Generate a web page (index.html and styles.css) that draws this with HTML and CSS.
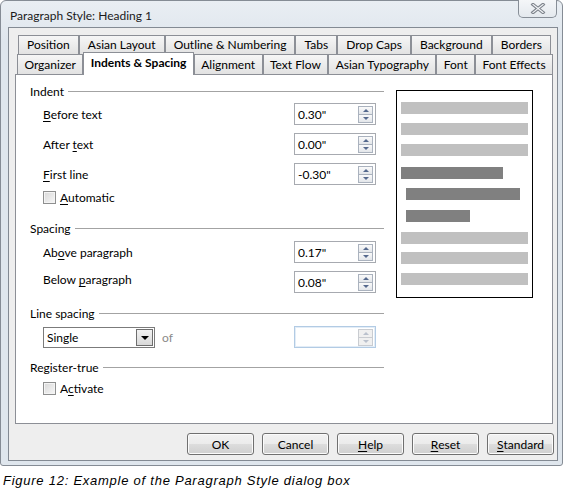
FILE: index.html
```html
<!DOCTYPE html>
<html>
<head>
<meta charset="utf-8">
<link rel="stylesheet" href="styles.css">
</head>
<body>
<div class="window">
  <div class="titlebar">
    <span class="title">Paragraph Style: Heading 1</span>
    <span class="close">
      <svg width="16" height="11" viewBox="0 0 16 11"><path d="M3 1.5 L13 9.5 M13 1.5 L3 9.5" stroke="#7d838b" stroke-width="3.4" stroke-linecap="square" fill="none"/><path d="M3 1.5 L13 9.5 M13 1.5 L3 9.5" stroke="#f3f5f8" stroke-width="1.2" stroke-linecap="square" fill="none"/></svg>
    </span>
  </div>
  <div class="client">
    <div class="tabrow row1">
      <div class="tab">Position</div>
      <div class="tab">Asian Layout</div>
      <div class="tab">Outline &amp; Numbering</div>
      <div class="tab">Tabs</div>
      <div class="tab">Drop Caps</div>
      <div class="tab">Background</div>
      <div class="tab">Borders</div>
    </div>
    <div class="tabrow row2">
      <div class="tab">Organizer</div>
      <div class="tab active">Indents &amp; Spacing</div>
      <div class="tab">Alignment</div>
      <div class="tab">Text Flow</div>
      <div class="tab">Asian Typography</div>
      <div class="tab">Font</div>
      <div class="tab">Font Effects</div>
    </div>
    <div class="panel">
      <div class="leftcol">
        <div class="ghead">Indent</div>
        <div class="field f-first">
          <span><u>B</u>efore text</span>
          <div class="spin"><span class="val">0.30"</span><span class="arrows"><span class="ab up"></span><span class="ab dn"></span></span></div>
        </div>
        <div class="field f-next">
          <span>After <u>t</u>ext</span>
          <div class="spin"><span class="val">0.00"</span><span class="arrows"><span class="ab up"></span><span class="ab dn"></span></span></div>
        </div>
        <div class="field f-next">
          <span><u>F</u>irst line</span>
          <div class="spin"><span class="val">-0.30"</span><span class="arrows"><span class="ab up"></span><span class="ab dn"></span></span></div>
        </div>
        <div class="check c-auto"><span class="box"></span><span><u>A</u>utomatic</span></div>

        <div class="ghead h-spacing">Spacing</div>
        <div class="field f-above">
          <span>Ab<u>o</u>ve paragraph</span>
          <div class="spin"><span class="val">0.17"</span><span class="arrows"><span class="ab up"></span><span class="ab dn"></span></span></div>
        </div>
        <div class="field f-next high">
          <span>Below <u>p</u>aragraph</span>
          <div class="spin"><span class="val">0.08"</span><span class="arrows"><span class="ab up"></span><span class="ab dn"></span></span></div>
        </div>

        <div class="ghead h-line">Line spacing</div>
        <div class="field f-select">
          <div class="selrow">
            <div class="select"><span class="val">Single</span><span class="drop"><span class="tri"></span></span></div>
            <span class="of">of</span>
          </div>
          <div class="spin disabled"><span class="val"></span><span class="arrows"><span class="ab up"></span><span class="ab dn"></span></span></div>
        </div>

        <div class="ghead h-reg">Register-true</div>
        <div class="check c-act"><span class="box"></span><span>A<u>c</u>tivate</span></div>
      </div>
      <div class="preview">
        <div class="bar light"></div>
        <div class="bar light"></div>
        <div class="bar light"></div>
        <div class="bar dark d1"></div>
        <div class="bar dark d2"></div>
        <div class="bar dark d3"></div>
        <div class="bar light l7"></div>
        <div class="bar light l8"></div>
        <div class="bar light"></div>
      </div>
    </div>
    <div class="buttons">
      <div class="btn">OK</div>
      <div class="btn">Cancel</div>
      <div class="btn"><u>H</u>elp</div>
      <div class="btn"><u>R</u>eset</div>
      <div class="btn"><u>S</u>tandard</div>
    </div>
  </div>
</div>
<div class="caption">Figure 12: Example of the Paragraph Style dialog box</div>
</body>
</html>
```
FILE: styles.css
```css
html, body {
  margin: 0;
  padding: 0;
  background: #ffffff;
}
body {
  width: 563px;
  height: 498px;
  overflow: hidden;
  font-family: Lato, "Open Sans", sans-serif;
  font-size: 12px;
  color: #000;
}
u {
  text-decoration: underline;
  text-underline-offset: 2px;
}
.window {
  width: 563px;
  box-sizing: border-box;
  border: 1px solid #858c95;
  border-radius: 6px 6px 3px 3px;
  background: linear-gradient(#e9eef3, #dfe6ed 40px, #dfe6ed);
  padding: 0 4px 4px 7px;
}
.titlebar {
  height: 26px;
  display: flex;
  justify-content: space-between;
  align-items: flex-start;
}
.title {
  padding-left: 2px;
  padding-top: 7px;
  line-height: 16px;
  color: #1a1a1a;
}
.close {
  width: 39px;
  height: 18px;
  box-sizing: border-box;
  margin-top: -1px;
  margin-right: 1px;
  border: 1px solid #878e97;
  border-top: none;
  border-radius: 0 0 5px 5px;
  background: linear-gradient(#f4f6f8, #e4e9ee);
  display: flex;
  align-items: center;
  justify-content: center;
}
.close svg { display: block; }
.client {
  border: 1px solid #838a93;
  background: #eeeeee;
  padding: 7px 4px 5px 6px;
}
.tabrow {
  display: flex;
}
.row1 {
  margin: 0 2px 0 3px;
  height: 19px;
}
.row2 {
  margin: 0 0 0 2px;
  height: 20px;
}
.tab {
  flex: 1 1 auto;
  box-sizing: border-box;
  border: 1px solid #8c8f96;
  border-bottom: none;
  background: linear-gradient(#f6f6f6, #e2e2e2);
  text-align: center;
  padding: 0 5px;
  white-space: nowrap;
}
.row1 .tab { line-height: 18px; }
.row2 .tab { line-height: 19px; }
.tab.active {
  background: #ffffff;
  font-weight: bold;
  height: 23px;
  margin-top: -2px;
  line-height: 20px;
  position: relative;
  z-index: 2;
}
.panel {
  height: 350px;
  box-sizing: border-box;
  border: 1px solid #8c8f96;
  background: #ffffff;
  padding: 8px 0 0 14px;
  display: flex;
  gap: 12px;
  position: relative;
  z-index: 1;
}
.leftcol {
  width: 354px;
  display: flex;
  flex-direction: column;
}
.ghead {
  height: 16px;
  display: flex;
  align-items: center;
}
.ghead::after {
  content: "";
  flex: 1;
  height: 1px;
  background: #a3a3a3;
  margin-left: 4px;
}
.h-spacing { margin-top: 16px; }
.h-line { margin-top: 12px; }
.h-reg { margin-top: 11px; }
.field {
  height: 22px;
  display: flex;
  align-items: center;
  justify-content: space-between;
  padding: 0 8px 0 13px;
}
.field.high > span:first-child {
  align-self: flex-start;
  line-height: 17px;
}
.f-first { margin-top: 4px; }
.f-next { margin-top: 8px; }
.f-above { margin-top: 5px; }
.f-select { margin-top: 5px; }
.spin {
  width: 82px;
  height: 22px;
  box-sizing: border-box;
  border: 1px solid #a7aab0;
  background: #fff;
  display: flex;
  align-items: center;
  padding-left: 3px;
}
.spin .val { flex: 1; }
.arrows {
  width: 15px;
  height: 17px;
  margin-right: 2px;
  display: flex;
  flex-direction: column;
}
.ab {
  flex: 1;
  box-sizing: border-box;
  border: 1px solid #aab2be;
  background: linear-gradient(#fafafa, #e3e6ea);
  display: flex;
  align-items: center;
  justify-content: center;
}
.ab.dn { border-top: none; }
.ab::before {
  content: "";
  width: 0;
  height: 0;
  border-left: 3px solid transparent;
  border-right: 3px solid transparent;
}
.ab.up::before { border-bottom: 3px solid #55698d; }
.ab.dn::before { border-top: 3px solid #55698d; }
.spin.disabled {
  border: 1px solid #b2cbe4;
  box-shadow: inset 0 0 0 1px #e3edf7;
}
.spin.disabled .ab {
  border-color: #c9ccd1;
  background: #f0f0f0;
}
.spin.disabled .ab::before { opacity: 0.35; }
.check {
  height: 14px;
  display: flex;
  align-items: center;
  padding-left: 13px;
  gap: 4px;
}
.c-auto { margin-top: 5px; }
.c-act { margin-top: 6px; }
.box {
  width: 13px;
  height: 13px;
  box-sizing: border-box;
  border: 1px solid #8e8f8f;
  background: linear-gradient(135deg, #d8d8d8, #f7f7f7);
  box-shadow: inset 0 0 0 1px #f4f4f4;
}
.selrow {
  display: flex;
  align-items: center;
  gap: 7px;
}
.select {
  width: 112px;
  height: 21px;
  box-sizing: border-box;
  border: 1px solid #7b7b7b;
  background: #fff;
  display: flex;
  align-items: center;
  padding-left: 3px;
}
.select .val { flex: 1; }
.drop {
  width: 17px;
  height: 17px;
  margin-right: 1px;
  box-sizing: border-box;
  border: 1px solid #6e6e6e;
  background: linear-gradient(#f2f2f2, #d9d9d9);
  display: flex;
  align-items: center;
  justify-content: center;
}
.tri {
  width: 0;
  height: 0;
  border-left: 4px solid transparent;
  border-right: 4px solid transparent;
  border-top: 4px solid #000;
  margin-top: 1px;
}
.of { color: #8a8a8a; }
.preview {
  width: 137px;
  height: 208px;
  box-sizing: border-box;
  margin-top: 7px;
  border: 1px solid #000;
  padding: 11px 4px 0 4px;
  display: flex;
  flex-direction: column;
  gap: 9px;
}
.bar {
  height: 12px;
  flex: none;
}
.light { background: #c0c0c0; width: 127px; }
.dark { background: #808080; }
.d1 { width: 102px; margin-top: 2px; }
.d2 { width: 114px; margin-left: 5px; }
.d3 { width: 64px; margin-left: 5px; margin-top: 1px; }
.l7 { margin-top: 1px; }
.l8 { margin-top: -1px; }
.buttons {
  display: flex;
  justify-content: flex-end;
  gap: 8px;
  margin-top: 9px;
  margin-right: -1px;
}
.btn {
  width: 67px;
  height: 22px;
  box-sizing: border-box;
  border: 1px solid #707070;
  border-radius: 3px;
  background: linear-gradient(#f2f2f2 0%, #ebebeb 50%, #dddddd 51%, #cfcfcf 100%);
  box-shadow: inset 0 0 0 1px #fbfbfb;
  display: flex;
  align-items: center;
  justify-content: center;
}
.caption {
  margin-top: 7px;
  padding-left: 3px;
  font-family: "Liberation Sans", Arial, sans-serif;
  font-style: italic;
  font-size: 13px;
  letter-spacing: 0.75px;
  line-height: 16px;
}
```
